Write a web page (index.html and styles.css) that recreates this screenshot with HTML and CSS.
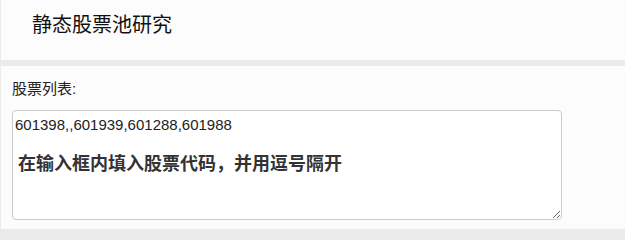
FILE: index.html
```html
<!DOCTYPE html>
<html lang="zh-CN">
<head>
<meta charset="utf-8">
<title>静态股票池研究</title>
<link rel="stylesheet" href="styles.css">
</head>
<body>
<div class="header">静态股票池研究</div>
<div class="panel">
  <div class="label">股票列表:</div>
  <div class="field">
    <textarea class="codes">601398,,601939,601288,601988</textarea>
    <div class="hint">在输入框内填入股票代码，并用逗号隔开</div>
  </div>
</div>
</body>
</html>
```
FILE: styles.css
```css
html, body {
  margin: 0;
  padding: 0;
}
body {
  background: #ebebeb;
  font-family: "Liberation Sans", "Noto Sans CJK SC", sans-serif;
  color: #333;
  overflow: hidden;
}
.header {
  margin-left: 1px;
  height: 60px;
  box-sizing: border-box;
  padding: 10px 0 0 31px;
  background: #fcfcfc;
  font-size: 20px;
  line-height: 30px;
  color: #111;
}
.panel {
  margin-top: 6px;
  margin-left: 1px;
  height: 163px;
  box-sizing: border-box;
  padding: 13px 11px 0 11px;
  background: #fcfcfc;
}
.label {
  font-size: 15px;
  line-height: 20px;
  margin-bottom: 11px;
  color: #222;
}
.field {
  position: relative;
  width: 550px;
  height: 110px;
}
.codes {
  display: block;
  box-sizing: border-box;
  width: 550px;
  height: 110px;
  margin: 0;
  padding: 4px 2px;
  border: 1px solid #ccc;
  border-radius: 4px;
  background: #fff;
  font-family: "Liberation Sans", "Noto Sans CJK SC", sans-serif;
  font-size: 15px;
  line-height: 20px;
  color: #222;
  outline: none;
}
.hint {
  position: absolute;
  left: 6px;
  top: 42px;
  font-size: 18px;
  line-height: 24px;
  font-weight: bold;
  color: #333;
  pointer-events: none;
}
```
